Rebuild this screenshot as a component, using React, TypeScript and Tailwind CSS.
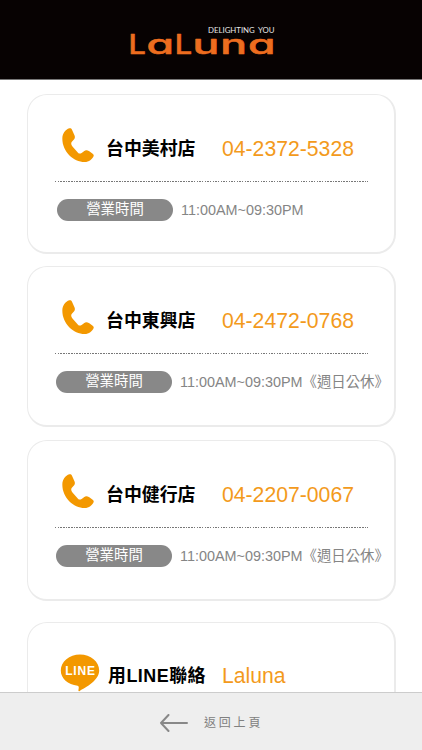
import clsx from 'clsx';

const SHOPS = [
  {
    name: '台中美村店',
    phone: '04-2372-5328',
    hours: '11:00AM~09:30PM',
    card: 'mt-[14px] h-[160px]',
    hoursRow: 'pl-[29px]'
  },
  {
    name: '台中東興店',
    phone: '04-2472-0768',
    hours: '11:00AM~09:30PM《週日公休》',
    card: 'mt-[12px] h-[161px]',
    hoursRow: 'pl-[28px]'
  },
  {
    name: '台中健行店',
    phone: '04-2207-0067',
    hours: '11:00AM~09:30PM《週日公休》',
    card: 'mt-[13px] h-[161px]',
    hoursRow: 'pl-[28px]'
  }
];

// the capitals are narrower than the round letters
const LOGO_LETTERS = [
  { char: 'L', x: 5.4, stretch: 1.16 },
  { char: 'a', x: 23.6, stretch: 1.68 },
  { char: 'L', x: 51.8, stretch: 1.16 },
  { char: 'u', x: 69.6, stretch: 1.68 },
  { char: 'n', x: 97.2, stretch: 1.68 },
  { char: 'a', x: 125, stretch: 1.68 }
];

const CARD =
  'ml-[27px] w-[369px] shrink-0 rounded-[20px] border-t border-r-2 border-b-2 border-l border-[#ebebeb] bg-white';

function Logo() {
  return (
    <svg className="h-[40px] w-[160px]" viewBox="0 0 160 40">
      <text
        x="85"
        y="13.2"
        fontSize="8.2"
        wordSpacing="1.5"
        textLength="66.5"
        lengthAdjust="spacingAndGlyphs"
        fill="#e6e6e6"
        className="font-['Lato',sans-serif]"
      >
        DELIGHTING YOU
      </text>
      {LOGO_LETTERS.map((letter, index) => (
        <text
          key={index}
          transform={`translate(${letter.x} 33.5) scale(${letter.stretch} 1)`}
          fontSize="26.5"
          fill="#ed6d1f"
          stroke="#ed6d1f"
          strokeWidth="0.5"
          strokeLinejoin="round"
          className="font-['Inter',sans-serif] font-medium [font-feature-settings:'cv11']"
        >
          {letter.char}
        </text>
      ))}
    </svg>
  );
}

function PhoneIcon() {
  return (
    <svg className="h-[37px] w-[37px] shrink-0" viewBox="120 125 111 111" fill="#f39800">
      <path d="M148 129C136 133 127 145 127 160C127 198 160 230 194 230C207 230 217 222 221 212C222 209 220 207 218 205L208 198C201 193 196 194 193 197L186 202C180 206 177 205 174 202L158 184C154 179 152 174 155 170L163 161C165 158 165 154 164 151L156 133C154 129 151 128 148 129Z" />
    </svg>
  );
}

function LineIcon() {
  return (
    <svg className="h-[40px] w-[40px] shrink-0" viewBox="0 0 40 40">
      <path
        d="M20 1.5C9.3 1.5.8 8.6.8 17.6C.8 25.6 7.8 31.6 17.6 32.7C19 33 19 34 18.4 37.2C18.3 38.2 19 38.4 19.8 37.9C26 34.3 39.2 27.5 39.2 17.6C39.2 8.6 30.7 1.5 20 1.5Z"
        fill="#f39800"
      />
      <text
        x="5.2"
        y="21.9"
        fontSize="12"
        textLength="29.8"
        fill="#fff"
        className="font-['Liberation_Sans',sans-serif] font-bold"
      >
        LINE
      </text>
    </svg>
  );
}

export default function App() {
  return (
    <div className="flex h-[750px] w-[422px] flex-col overflow-hidden bg-white font-['Liberation_Sans','Noto_Sans_CJK_TC',sans-serif]">
      <header className="flex h-[80px] shrink-0 justify-center border-b border-[#777] bg-[#070202] pt-[20px] pr-[16px]">
        <Logo />
      </header>

      <main className="flex min-h-0 flex-1 flex-col overflow-hidden">
        {SHOPS.map((shop) => (
          <section key={shop.name} className={clsx(CARD, shop.card)}>
            <div className="flex h-[86px] items-start pt-[32px] pl-[32px]">
              <PhoneIcon />
              <h2 className="ml-[9px] w-[116px] pt-[8px] text-[17.9px] leading-[28px] font-bold whitespace-nowrap text-black">
                {shop.name}
              </h2>
              <p className="pt-[8px] text-[21.2px] leading-[28px] whitespace-nowrap text-[#f39a1c]">{shop.phone}</p>
            </div>
            <div className="ml-[27px] h-px w-[313px] bg-[repeating-linear-gradient(90deg,#777_0_1.5px,transparent_1.5px_2.67px)]" />
            <div className={clsx('mt-[17px] flex items-center', shop.hoursRow)}>
              <span className="h-[22px] w-[116px] rounded-full bg-[#888] text-center text-[14.4px] leading-[21px] text-white">
                營業時間
              </span>
              <span className="ml-[8px] text-[14.4px] leading-[22px] whitespace-nowrap text-[#858585]">
                {shop.hours}
              </span>
            </div>
          </section>
        ))}

        {/* LINE contact, cut off by the bottom bar */}
        <section className={clsx(CARD, 'mt-[21px] h-[160px]')}>
          <div className="flex items-start pt-[30px] pl-[32px]">
            <LineIcon />
            <h2 className="ml-[8px] w-[114px] pt-[9px] text-[17.9px] leading-[28px] font-bold tracking-[0.5px] whitespace-nowrap text-black">
              用LINE聯絡
            </h2>
            <p className="pt-[9px] text-[21.2px] leading-[28px] text-[#f39a1c]">Laluna</p>
          </div>
        </section>
      </main>

      <footer className="flex h-[58px] shrink-0 items-center border-t border-[#ccc] bg-[#eee] pt-[2px] pl-[159px] text-[#808080]">
        <svg className="h-[18px] w-[30px]" viewBox="0 0 30 18" fill="none" stroke="#888" strokeWidth="2" strokeLinecap="round" strokeLinejoin="round">
          <path d="M28 9H2M9.5 1L2 9L9.5 17" />
        </svg>
        <span className="ml-[15px] text-[12px] tracking-[2.8px]">返回上頁</span>
      </footer>
    </div>
  );
}
